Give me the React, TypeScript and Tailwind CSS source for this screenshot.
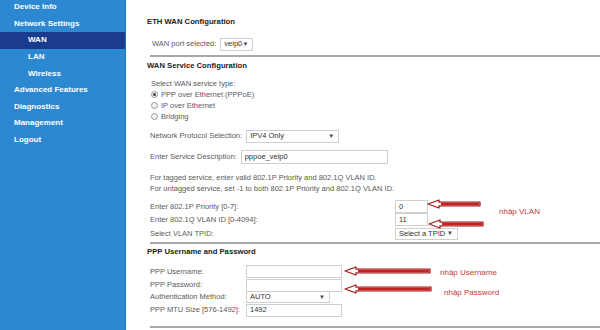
import type { ReactNode } from "react";

const menu = [
  { label: "Device Info", sub: false },
  { label: "Network Settings", sub: false },
  { label: "WAN", sub: true, active: true },
  { label: "LAN", sub: true },
  { label: "Wireless", sub: true },
  { label: "Advanced Features", sub: false },
  { label: "Diagnostics", sub: false },
  { label: "Management", sub: false },
  { label: "Logout", sub: false },
];

function Box({ w, value, arrow }: { w: string; value?: string; arrow?: boolean }) {
  return (
    <div
      className={`flex h-full items-center justify-between border border-[#cfcfcf] bg-white pl-[3px] pr-[4px] text-[#333] ${w}`}
    >
      <span>{value}</span>
      {arrow ? <span className="text-[6px] text-[#444]">▼</span> : null}
    </div>
  );
}

function Row({ className, children }: { className: string; children: ReactNode }) {
  return <div className={`flex items-center ${className}`}>{children}</div>;
}

function Heading({ className, children }: { className: string; children: ReactNode }) {
  return (
    <div className={`flex h-[12px] items-center text-[7.7px] font-bold text-[#222] ${className}`}>
      {children}
    </div>
  );
}

function Radio({ checked, label }: { checked?: boolean; label: string }) {
  return (
    <div className="flex h-[11px] items-center pl-[4px]">
      <span className="flex h-[7px] w-[7px] items-center justify-center rounded-full border border-[#9a9a9a] bg-[#f2f2f2]">
        {checked ? <span className="h-[3px] w-[3px] rounded-full bg-[#444]" /> : null}
      </span>
      <span className="ml-[3px]">{label}</span>
    </div>
  );
}

function Arrow({ x, y, len }: { x: number; y: number; len: number }) {
  return (
    <g transform={`translate(${x} ${y})`}>
      <polygon
        points={`0,0 11,-4 11,-1.8 ${len},-1.8 ${len},1.8 11,1.8 11,4`}
        fill="#fff"
        stroke="#a81b1b"
        strokeWidth="1.3"
        strokeLinejoin="round"
      />
      <rect x="13" y="-1" width={len - 14} height="2" fill="#c42222" />
    </g>
  );
}

export default function App() {
  return (
    <div className="relative flex h-[330px] w-[600px] overflow-hidden bg-white font-['Liberation_Sans',Arial,sans-serif] text-[7.5px] text-[#5a5a5a]">
      <aside className="h-full w-[126px] shrink-0 border-r border-[#1f6fb4] bg-[#2d88d2]">
        <ul className="-mt-[1px]">
          {menu.map((m) => (
            <li
              key={m.label}
              className={`flex h-[16.6px] items-center text-[8px] font-bold text-white ${
                m.sub ? "pl-[28px]" : "pl-[14px]"
              } ${m.active ? "bg-[#1b3c8e]" : ""}`}
            >
              {m.label}
            </li>
          ))}
        </ul>
      </aside>

      <main className="ml-[21px] flex flex-1 flex-col">
        <Heading className="mt-[16px]">ETH WAN Configuration</Heading>
        <Row className="mt-[9px] h-[14px] pl-[5px]">
          <span>WAN port selected:</span>
          <div className="ml-[4px] h-[13px]">
            <Box w="w-[33px]" value="veip0" arrow />
          </div>
        </Row>
        <div className="ml-[3px] mt-[4px] h-[2px] bg-[#a8a8a8]" />

        <Heading className="mt-[3px]">WAN Service Configuration</Heading>
        <Row className="mt-[7px] h-[10px] pl-[4px]">Select WAN service type:</Row>
        <Radio checked label="PPP over Ethernet (PPPoE)" />
        <Radio label="IP over Ethernet" />
        <Radio label="Bridging" />

        <Row className="mt-[7px] h-[14px] pl-[3px]">
          <span>Network Protocol Selection:</span>
          <div className="ml-[4px] h-[13px]">
            <Box w="w-[93px]" value="IPV4 Only" arrow />
          </div>
        </Row>
        <Row className="mt-[7px] h-[14px] pl-[3px]">
          <span>Enter Service Description:</span>
          <div className="ml-[4px] h-[14px]">
            <Box w="w-[147px]" value="pppoe_veip0" />
          </div>
        </Row>

        <Row className="mt-[8px] h-[11px] pl-[3px]">
          For tagged service, enter valid 802.1P Priority and 802.1Q VLAN ID.
        </Row>
        <Row className="h-[11px] pl-[3px]">
          For untagged service, set -1 to both 802.1P Priority and 802.1Q VLAN ID.
        </Row>

        <Row className="mt-[6px] h-[13px] pl-[3px]">
          <span className="w-[245px]">Enter 802.1P Priority [0-7]:</span>
          <div className="h-[13px]">
            <Box w="w-[33px]" value="0" />
          </div>
        </Row>
        <Row className="h-[13px] pl-[3px]">
          <span className="w-[245px]">Enter 802.1Q VLAN ID [0-4094]:</span>
          <div className="h-[13px]">
            <Box w="w-[33px]" value="11" />
          </div>
        </Row>
        <Row className="mt-[1px] h-[13px] pl-[3px]">
          <span className="w-[245px]">Select VLAN TPID:</span>
          <div className="h-[12px]">
            <Box w="w-[63px]" value="Select a TPID" arrow />
          </div>
        </Row>
        <div className="ml-[3px] mt-[2px] h-[2px] bg-[#a8a8a8]" />

        <Heading className="mt-[2px]">PPP Username and Password</Heading>
        <Row className="mt-[7px] h-[13px] pl-[3px]">
          <span className="w-[96px]">PPP Username:</span>
          <div className="h-[13px]">
            <Box w="w-[96px]" />
          </div>
        </Row>
        <Row className="mt-[1px] h-[12px] pl-[3px]">
          <span className="w-[96px]">PPP Password:</span>
          <div className="h-[13px]">
            <Box w="w-[96px]" />
          </div>
        </Row>
        <Row className="h-[12px] pl-[3px]">
          <span className="w-[96px]">Authentication Method:</span>
          <div className="h-[12px]">
            <Box w="w-[84px]" value="AUTO" arrow />
          </div>
        </Row>
        <Row className="mt-[1px] h-[12px] pl-[3px]">
          <span className="w-[96px]">PPP MTU Size [576-1492]:</span>
          <div className="h-[13px]">
            <Box w="w-[96px]" value="1492" />
          </div>
        </Row>
        <div className="ml-[3px] mt-[10px] h-[2px] bg-[#a8a8a8]" />
      </main>

      <svg className="pointer-events-none absolute left-0 top-0" width="600" height="330">
        <Arrow x={428} y={204} len={52} />
        <Arrow x={429} y={224} len={54} />
        <Arrow x={345} y={271} len={85} />
        <Arrow x={345} y={289} len={86} />
      </svg>
      <span className="absolute left-[499px] top-[206px] text-[8px] text-[#c43a3a]">nhập VLAN</span>
      <span className="absolute left-[440px] top-[267px] text-[8px] text-[#c43a3a]">nhập Username</span>
      <span className="absolute left-[444px] top-[287px] text-[8px] text-[#c43a3a]">nhập Password</span>
    </div>
  );
}
